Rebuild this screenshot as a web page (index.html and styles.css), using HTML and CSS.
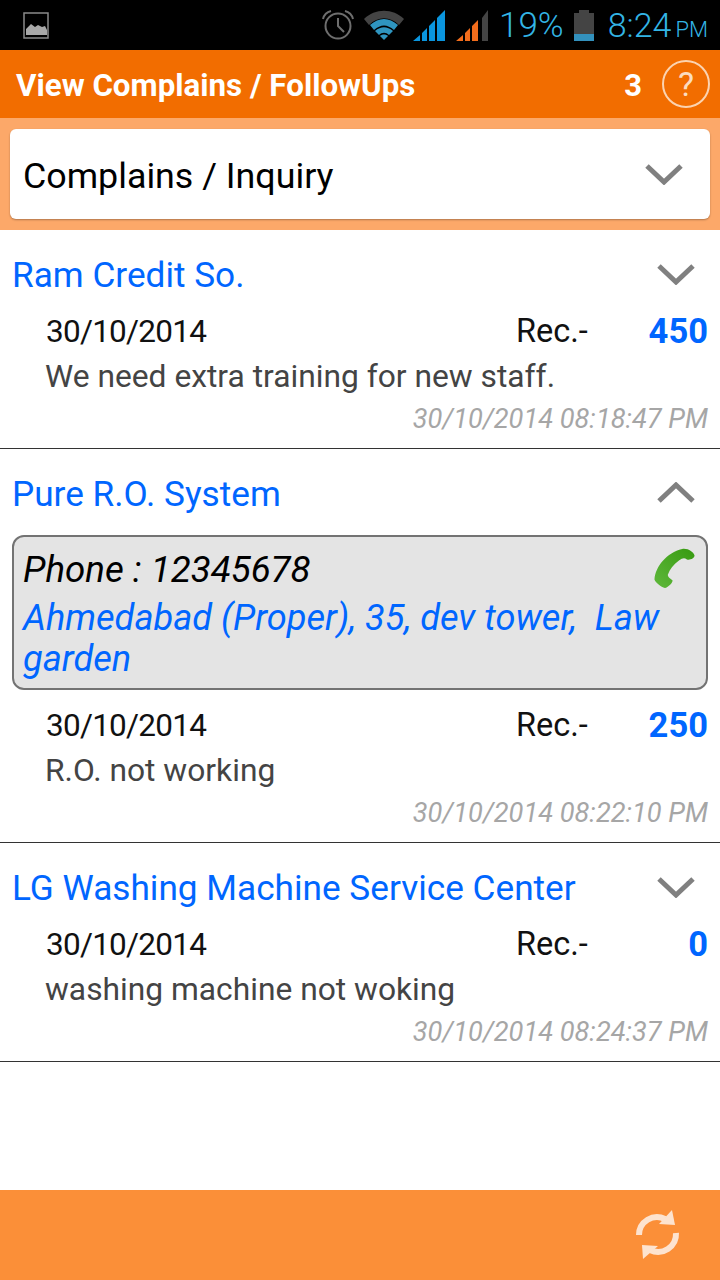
FILE: index.html
```html
<!DOCTYPE html>
<html lang="en">
<head>
    <meta charset="UTF-8">
    <meta name="viewport" content="width=device-width, initial-scale=1.0">
    <title>View Complains / FollowUps</title>
    <link rel="stylesheet" href="styles.css">
</head>
<body>
    <div class="app">
        <div class="status-bar">
            <svg class="pic-icon" width="26" height="27" viewBox="0 0 26 27">
                <rect x="1" y="1" width="24" height="25" fill="none" stroke="#8a8a8a" stroke-width="1.5"/>
                <path d="M3 23V17L8 12L12 15L15 13L19 15L22 14L24 18V23Z" fill="#a8a8a8"/>
            </svg>
            <div class="status-right">
                <svg class="alarm" width="34" height="30" viewBox="0 0 34 30">
                    <circle cx="17" cy="16" r="12.5" fill="none" stroke="#6e6e6e" stroke-width="2"/>
                    <path d="M17 8V16L23 22" fill="none" stroke="#6e6e6e" stroke-width="2"/>
                    <path d="M2 9C3 5 6 2 10 1M32 9C31 5 28 2 24 1" fill="none" stroke="#6e6e6e" stroke-width="2"/>
                </svg>
                <svg class="wifi" width="40" height="30" viewBox="0 0 40 30">
                    <path d="M0 9C11 -2 29 -2 40 9L35 15C26 6 14 6 5 15Z" fill="#444"/>
                    <path d="M6 15C15 7 25 7 34 15L30 20C23 14 17 14 10 20Z" fill="#2f95c0"/>
                    <path d="M11 21C17 16 23 16 29 21L25 25C22 22 18 22 15 25Z" fill="#2f95c0"/>
                    <path d="M16 26C18 24 22 24 24 26L20 30Z" fill="#2f95c0"/>
                </svg>
                <svg class="signal" width="33" height="32" viewBox="0 0 33 32">
                    <path d="M0 32L7 26V32Z M9 24L14 19V32H9Z M16 17L22 11V32H16Z M24 9L32 1V32H24Z" fill="#0a95de"/>
                </svg>
                <svg class="signal" width="33" height="32" viewBox="0 0 33 32">
                    <path d="M0 32L7 26V32Z M9 24L14 19V32H9Z M16 17L22 11V32H16Z" fill="#f26d1c"/>
                    <path d="M26 9L32 1V32H26Z" fill="#444"/>
                </svg>
                <span class="battery-text">19%</span>
                <div class="battery">
                    <div class="battery-cap"></div>
                    <div class="battery-body"><div class="battery-level"></div></div>
                </div>
                <span class="clock">8:24<small>PM</small></span>
            </div>
        </div>

        <div class="header">
            <h1>View Complains / FollowUps</h1>
            <span class="count">3</span>
            <div class="help">?</div>
        </div>

        <div class="filter">
            <div class="select">
                <span>Complains / Inquiry</span>
                <svg class="chevron" width="40" height="22" viewBox="0 0 40 22"><path d="M3 3L20 19L37 3"/></svg>
            </div>
        </div>

        <div class="list">
            <div class="item">
                <div class="item-head">
                    <span class="name">Ram Credit So.</span>
                    <svg class="chevron" width="40" height="22" viewBox="0 0 40 22"><path d="M3 3L20 19L37 3"/></svg>
                </div>
                <div class="row">
                    <span class="date">30/10/2014</span>
                    <span class="rec">Rec.-</span>
                    <span class="amount">450</span>
                </div>
                <div class="desc">We need extra training for new staff.</div>
                <div class="stamp">30/10/2014 08:18:47 PM</div>
            </div>

            <div class="item">
                <div class="item-head">
                    <span class="name">Pure R.O. System</span>
                    <svg class="chevron" width="40" height="22" viewBox="0 0 40 22"><path d="M3 19L20 3L37 19"/></svg>
                </div>
                <div class="contact">
                    <div class="phone">Phone : 12345678</div>
                    <div class="address">Ahmedabad (Proper), 35, dev tower,&nbsp; Law garden</div>
                    <svg class="call" width="43" height="42" viewBox="0 0 44 44">
                        <defs>
                            <linearGradient id="callGreen" x1="1" y1="0" x2="0" y2="1">
                                <stop offset="0" stop-color="#379a10"/>
                                <stop offset="1" stop-color="#5fb83c"/>
                            </linearGradient>
                        </defs>
                        <path d="M30 2C36 1 42 5 43 9C43 12 38 14 35 13C32 11 30 12 27 14C21 18 17 24 15 29C15 32 18 33 20 35C20 38 15 42 12 43C8 42 2 37 1 34C2 20 14 6 30 2Z" fill="url(#callGreen)"/>
                    </svg>
                </div>
                <div class="row">
                    <span class="date">30/10/2014</span>
                    <span class="rec">Rec.-</span>
                    <span class="amount">250</span>
                </div>
                <div class="desc">R.O. not working</div>
                <div class="stamp">30/10/2014 08:22:10 PM</div>
            </div>

            <div class="item">
                <div class="item-head">
                    <span class="name">LG Washing Machine Service Center</span>
                    <svg class="chevron" width="40" height="22" viewBox="0 0 40 22"><path d="M3 3L20 19L37 3"/></svg>
                </div>
                <div class="row">
                    <span class="date">30/10/2014</span>
                    <span class="rec">Rec.-</span>
                    <span class="amount">0</span>
                </div>
                <div class="desc">washing machine not woking</div>
                <div class="stamp">30/10/2014 08:24:37 PM</div>
            </div>
        </div>

        <div class="footer">
            <svg class="refresh" width="46" height="50" viewBox="0 0 46 50">
                <path d="M4 25A18 18 0 0 1 30 9" fill="none" stroke="#fde3cf" stroke-width="6"/>
                <path d="M37 0L40 15L24 14Z" fill="#fde3cf"/>
                <path d="M41 23A18 18 0 0 1 15 40" fill="none" stroke="#fde3cf" stroke-width="6"/>
                <path d="M7 35L23 36L8 49Z" fill="#fde3cf"/>
            </svg>
        </div>
    </div>
</body>
</html>
```

FILE: styles.css
```css
* {
    box-sizing: border-box;
}
body {
    margin: 0;
    padding: 0;
    font-family: Roboto, Arial, sans-serif;
    background-color: #fff;
}
.app {
    width: 720px;
    height: 1280px;
    display: flex;
    flex-direction: column;
    overflow: hidden;
}
.status-bar {
    height: 50px;
    background-color: #000;
    display: flex;
    align-items: center;
    justify-content: space-between;
    padding: 0 12px 0 23px;
}
.status-right {
    display: flex;
    align-items: center;
    color: #33b5e5;
}
.alarm {
    margin-right: 9px;
}
.wifi {
    margin-right: 9px;
}
.signal {
    margin-right: 10px;
}
.battery-text {
    font-size: 35px;
    font-weight: 300;
    margin-right: 10px;
}
.battery {
    width: 20px;
    display: flex;
    flex-direction: column;
    align-items: center;
    margin-right: 14px;
}
.battery-cap {
    width: 10px;
    height: 3px;
    background-color: #444;
}
.battery-body {
    width: 20px;
    height: 28px;
    background-color: #444;
    display: flex;
    align-items: flex-end;
}
.battery-level {
    width: 100%;
    height: 7px;
    background-color: #3391bd;
}
.clock {
    font-size: 34px;
    font-weight: 300;
}
.clock small {
    font-size: 22px;
    margin-left: 4px;
}
.header {
    height: 68px;
    background-color: #f26d00;
    display: flex;
    align-items: center;
    padding: 2px 10px 0 16px;
    color: #fff;
}
.header h1 {
    flex: 1;
    margin: 0;
    font-size: 31.3px;
    font-weight: 700;
}
.count {
    font-size: 31px;
    font-weight: 700;
    margin-right: 20px;
}
.help {
    width: 48px;
    height: 48px;
    margin-top: -3px;
    border: 2px solid #fbd3b0;
    border-radius: 50%;
    text-align: center;
    font-size: 34px;
    line-height: 44px;
    color: #fbdcc0;
}
.filter {
    height: 112px;
    background-color: #fca869;
    padding: 11px 10px;
}
.select {
    height: 90px;
    background-color: #fff;
    border-radius: 6px;
    box-shadow: 0 1px 2px rgba(0, 0, 0, 0.3);
    display: flex;
    align-items: center;
    justify-content: space-between;
    padding: 0 26px 0 13px;
    font-size: 35.8px;
    color: #000;
}
.select span {
    padding-top: 3px;
}
.chevron path {
    fill: none;
    stroke: #808080;
    stroke-width: 5;
}
.item {
    border-bottom: 1px solid #333;
    padding: 0 12px;
}
.item-head {
    height: 81px;
    padding-top: 6px;
    display: flex;
    align-items: center;
    justify-content: space-between;
}
.item-head .chevron {
    margin-right: 12px;
}
.name {
    padding-top: 2px;
    font-size: 35.2px;
    color: #0066ff;
}
.row {
    display: flex;
    align-items: center;
    height: 40px;
    padding-left: 34px;
    font-size: 31.5px;
    color: #111;
}
.date {
    flex: 1;
    letter-spacing: -0.75px;
}
.rec {
    width: 132px;
    font-size: 32.5px;
}
.amount {
    width: 60px;
    text-align: right;
    font-weight: 700;
    font-size: 34.5px;
    color: #0066ff;
}
.desc {
    height: 50px;
    padding-left: 33px;
    font-size: 31.75px;
    line-height: 52px;
    color: #444;
}
.stamp {
    height: 47px;
    text-align: right;
    font-size: 27.2px;
    font-style: italic;
    line-height: 36px;
    color: #a6a6a6;
}
.contact {
    position: relative;
    margin: 5px 0 15px;
    padding: 11px 9px 9px 9px;
    background-color: #e4e4e4;
    border: 2px solid #737373;
    border-radius: 12px;
    font-style: italic;
    font-size: 36.2px;
}
.phone {
    line-height: 44px;
    font-size: 36.7px;
    color: #000;
}
.address {
    margin-top: 5px;
    line-height: 41px;
    color: #0066ff;
}
.call {
    position: absolute;
    top: 10px;
    right: 10px;
}
.list {
    flex: 1;
}
.footer {
    height: 90px;
    background-color: #fb8f38;
    display: flex;
    align-items: center;
    justify-content: flex-end;
    padding-right: 39px;
}
```
